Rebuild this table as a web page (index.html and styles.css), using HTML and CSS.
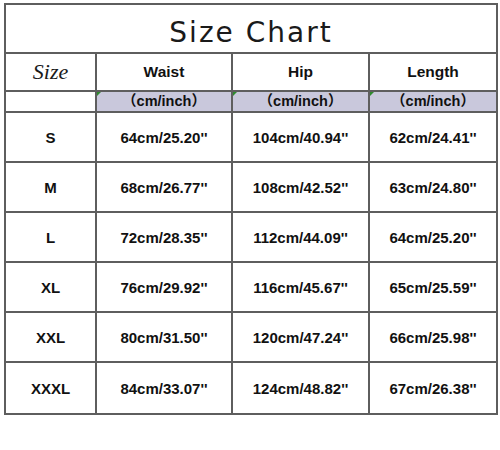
FILE: index.html
```html
<!DOCTYPE html>
<html>
<head>
<meta charset="utf-8">
<link rel="stylesheet" href="styles.css">
</head>
<body>
<table class="chart">
  <colgroup>
    <col class="c1"><col class="c2"><col class="c3"><col class="c4">
  </colgroup>
  <tr class="title-row"><td colspan="4" class="title">Size Chart</td></tr>
  <tr class="head-row">
    <td class="size-label">Size</td>
    <td>Waist</td>
    <td>Hip</td>
    <td>Length</td>
  </tr>
  <tr class="unit-row">
    <td class="blank"></td>
    <td class="unit">（cm/inch）</td>
    <td class="unit">（cm/inch）</td>
    <td class="unit">（cm/inch）</td>
  </tr>
  <tr class="data"><td>S</td><td>64cm/25.20''</td><td>104cm/40.94''</td><td>62cm/24.41''</td></tr>
  <tr class="data"><td>M</td><td>68cm/26.77''</td><td>108cm/42.52''</td><td>63cm/24.80''</td></tr>
  <tr class="data"><td>L</td><td>72cm/28.35''</td><td>112cm/44.09''</td><td>64cm/25.20''</td></tr>
  <tr class="data"><td>XL</td><td>76cm/29.92''</td><td>116cm/45.67''</td><td>65cm/25.59''</td></tr>
  <tr class="data"><td>XXL</td><td>80cm/31.50''</td><td>120cm/47.24''</td><td>66cm/25.98''</td></tr>
  <tr class="data last"><td>XXXL</td><td>84cm/33.07''</td><td>124cm/48.82''</td><td>67cm/26.38''</td></tr>
</table>
</body>
</html>
```

FILE: styles.css
```css
html, body {
  margin: 0;
  padding: 0;
  background: #ffffff;
}
body {
  padding: 3px 0 0 4px;
}
.chart {
  border-collapse: collapse;
  table-layout: fixed;
  width: 492px;
  font-family: "Liberation Sans", Arial, sans-serif;
  font-weight: bold;
  font-size: 15px;
  color: #111;
}
.c1 { width: 91px; }
.c2 { width: 136px; }
.c3 { width: 137px; }
.c4 { width: 128px; }
.chart td {
  border: 2px solid #5e5e5e;
  text-align: center;
  vertical-align: middle;
  padding: 0;
  position: relative;
}
.title-row { height: 49px; }
.chart td.title {
  font-family: "DejaVu Sans", sans-serif;
  font-weight: normal;
  font-size: 28px;
  letter-spacing: 2px;
  color: #1a1a1a;
  padding-top: 8px;
  line-height: 38px;
}
.head-row { height: 38px; }
.head-row td { font-size: 15.5px; }
.chart td.size-label {
  font-family: "Liberation Serif", serif;
  font-style: italic;
  font-weight: normal;
  font-size: 22px;
  color: #1a1a1a;
}
.unit-row { height: 21px; }
.unit-row td {
  font-family: "Liberation Sans", "Noto Sans CJK SC", sans-serif;
  font-size: 14.5px;
  line-height: 17px;
}
.unit {
  background: #c9c8dc;
}
.unit::before {
  content: "";
  position: absolute;
  left: 0;
  top: 0;
  border-top: 4px solid #2f8a2f;
  border-right: 4px solid transparent;
}
.data { height: 50px; }
.data.last { height: 52px; }
```
